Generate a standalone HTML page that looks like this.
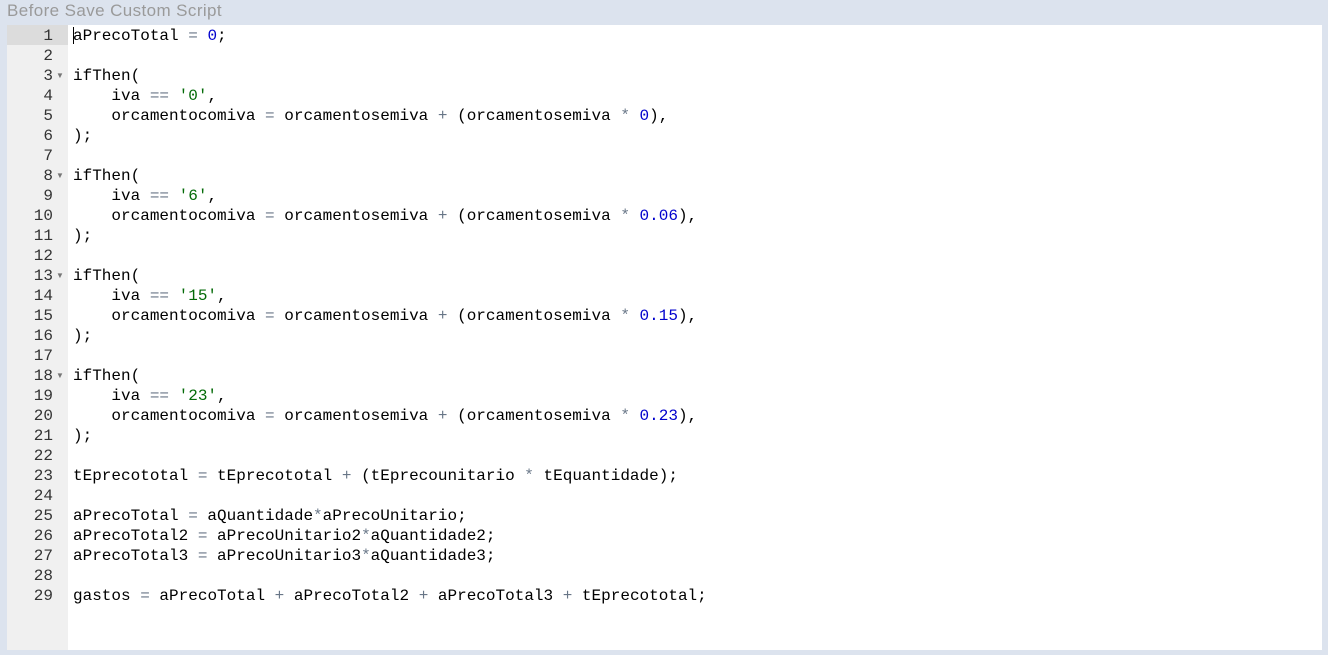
<!DOCTYPE html>
<html><head><meta charset="utf-8"><style>
body{margin:0;width:1328px;height:655px;background:#dce3ee;overflow:hidden;position:relative;font-family:"Liberation Sans",sans-serif}
.title{position:absolute;left:7px;top:0;font-size:17px;color:#9a9a9a;line-height:22px;letter-spacing:0.4px}
.ed{position:absolute;left:7px;top:25px;width:1315px;height:625px;background:#fff}
.gut{position:absolute;left:0;top:0;width:61px;height:625px;background:#f0f0f0}
.act{position:absolute;left:0;top:0;width:61px;height:20px;background:#dcdcdc}
.ln{position:absolute;left:0;width:46px;text-align:right;font:16px/20px "Liberation Mono",monospace;color:#333;margin-top:1px}
.code{position:absolute;left:66px;top:1px;font:16px/20px "Liberation Mono",monospace;color:#000;white-space:pre;margin:0}
.o{color:#687687}.n{color:#0000cd}.s{color:#036a07}
.fold{position:absolute;left:49px;font-size:8px;color:#777;line-height:20px;margin-top:1px}
.cur{position:absolute;left:66px;top:2px;width:1px;height:17px;background:#000}
</style></head><body>
<div class="title">Before Save Custom Script</div>
<div class="ed">
<div class="gut"><div class="act"></div>
<div class="ln" style="top:0">1</div><div class="ln" style="top:20px">2</div><div class="ln" style="top:40px">3</div><div class="ln" style="top:60px">4</div><div class="ln" style="top:80px">5</div><div class="ln" style="top:100px">6</div><div class="ln" style="top:120px">7</div><div class="ln" style="top:140px">8</div><div class="ln" style="top:160px">9</div><div class="ln" style="top:180px">10</div><div class="ln" style="top:200px">11</div><div class="ln" style="top:220px">12</div><div class="ln" style="top:240px">13</div><div class="ln" style="top:260px">14</div><div class="ln" style="top:280px">15</div><div class="ln" style="top:300px">16</div><div class="ln" style="top:320px">17</div><div class="ln" style="top:340px">18</div><div class="ln" style="top:360px">19</div><div class="ln" style="top:380px">20</div><div class="ln" style="top:400px">21</div><div class="ln" style="top:420px">22</div><div class="ln" style="top:440px">23</div><div class="ln" style="top:460px">24</div><div class="ln" style="top:480px">25</div><div class="ln" style="top:500px">26</div><div class="ln" style="top:520px">27</div><div class="ln" style="top:540px">28</div><div class="ln" style="top:560px">29</div>
<div class="fold" style="top:40px">▼</div><div class="fold" style="top:140px">▼</div><div class="fold" style="top:240px">▼</div><div class="fold" style="top:340px">▼</div>
</div>
<div class="cur"></div>
<pre class="code">aPrecoTotal <span class="o">=</span> <span class="n">0</span>;

ifThen(
    iva <span class="o">==</span> <span class="s">'0'</span>,
    orcamentocomiva <span class="o">=</span> orcamentosemiva <span class="o">+</span> (orcamentosemiva <span class="o">*</span> <span class="n">0</span>),
);

ifThen(
    iva <span class="o">==</span> <span class="s">'6'</span>,
    orcamentocomiva <span class="o">=</span> orcamentosemiva <span class="o">+</span> (orcamentosemiva <span class="o">*</span> <span class="n">0.06</span>),
);

ifThen(
    iva <span class="o">==</span> <span class="s">'15'</span>,
    orcamentocomiva <span class="o">=</span> orcamentosemiva <span class="o">+</span> (orcamentosemiva <span class="o">*</span> <span class="n">0.15</span>),
);

ifThen(
    iva <span class="o">==</span> <span class="s">'23'</span>,
    orcamentocomiva <span class="o">=</span> orcamentosemiva <span class="o">+</span> (orcamentosemiva <span class="o">*</span> <span class="n">0.23</span>),
);

tEprecototal <span class="o">=</span> tEprecototal <span class="o">+</span> (tEprecounitario <span class="o">*</span> tEquantidade);

aPrecoTotal <span class="o">=</span> aQuantidade<span class="o">*</span>aPrecoUnitario;
aPrecoTotal2 <span class="o">=</span> aPrecoUnitario2<span class="o">*</span>aQuantidade2;
aPrecoTotal3 <span class="o">=</span> aPrecoUnitario3<span class="o">*</span>aQuantidade3;

gastos <span class="o">=</span> aPrecoTotal <span class="o">+</span> aPrecoTotal2 <span class="o">+</span> aPrecoTotal3 <span class="o">+</span> tEprecototal;</pre>
</div>
</body></html>
